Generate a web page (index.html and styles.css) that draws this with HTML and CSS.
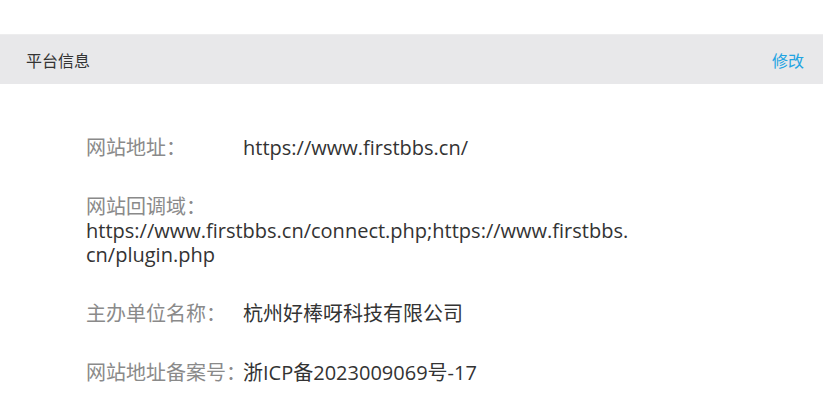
FILE: index.html
```html
<!DOCTYPE html>
<html lang="zh-CN">
<head>
<meta charset="utf-8">
<title>平台信息</title>
<link rel="stylesheet" href="styles.css">
</head>
<body>
<div class="page">
  <div class="panel-head">
    <span class="panel-title">平台信息</span>
    <a class="panel-action" href="#">修改</a>
  </div>
  <div class="panel-body">
    <div class="row">
      <span class="label">网站地址：</span>
      <span class="value">https://www.firstbbs.cn/</span>
    </div>
    <div class="row">
      <span class="label">网站回调域：</span>
      <span class="value">https://www.firstbbs.cn/connect.php;https://www.firstbbs.cn/plugin.php</span>
    </div>
    <div class="row">
      <span class="label">主办单位名称：</span>
      <span class="value">杭州好棒呀科技有限公司</span>
    </div>
    <div class="row">
      <span class="label">网站地址备案号：</span>
      <span class="value">浙ICP备2023009069号-17</span>
    </div>
  </div>
</div>
</body>
</html>
```

FILE: styles.css
```css
html, body {
  margin: 0;
  padding: 0;
  background: #ffffff;
}

body {
  font-family: "Open Sans", "Noto Sans CJK SC", sans-serif;
  color: #333333;
}

.page {
  padding-top: 34px;
}

.panel-head {
  display: flex;
  align-items: center;
  justify-content: space-between;
  height: 50px;
  padding: 0 19px 0 26px;
  background: #e8e8ea;
  border-top: 1px solid #ededee;
  box-sizing: border-box;
}

.panel-title {
  font-size: 16px;
  color: #333333;
}

.panel-action {
  font-size: 16px;
  color: #22a4e2;
  text-decoration: none;
}

.panel-body {
  padding: 52px 0 0 86px;
}

.row {
  display: flex;
  flex-wrap: wrap;
  max-width: 560px;
  font-size: 20px;
  line-height: 24px;
  margin-bottom: 35px;
}

.label {
  width: 157px;
  flex: none;
  white-space: nowrap;
  color: #8a8a8a;
}

.value {
  max-width: 550px;
  word-break: break-all;
  color: #333333;
}
```
